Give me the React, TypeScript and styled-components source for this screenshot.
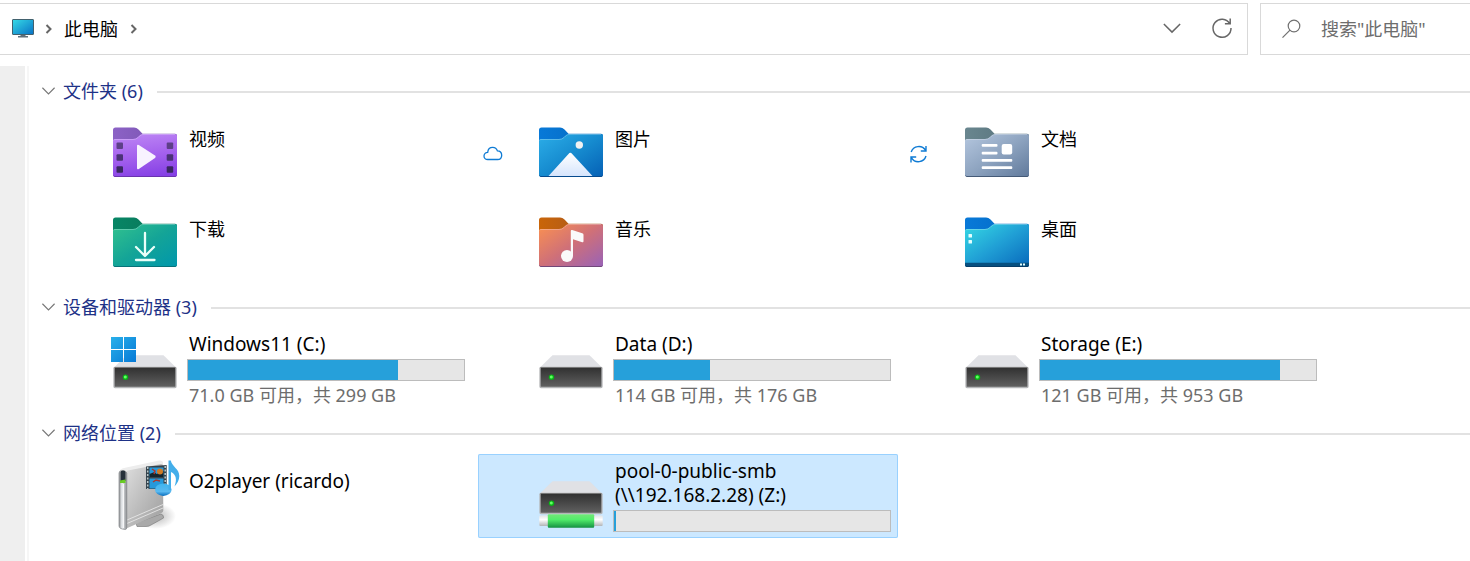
import React, { useState } from 'react';
import styled, { createGlobalStyle } from 'styled-components';

const GlobalStyle = createGlobalStyle`
  * { box-sizing: border-box; }
  body {
    margin: 0;
    background: #fff;
    color: #000;
    font: 18px/24px "Noto Sans", "Noto Sans CJK SC", sans-serif;
  }
  button, input { font: inherit; color: inherit; }
`;

const Page = styled.div`
  display: flex;
  flex-direction: column;
  min-height: 100vh;
  overflow-x: hidden;
`;

const Toolbar = styled.header`
  display: flex;
  gap: 12px;
  padding-top: 3px;
`;

const AddressBar = styled.nav`
  flex: 1;
  display: flex;
  align-items: center;
  height: 52px;
  padding: 0 14px 0 12px;
  border: 1px solid #d9d9d9;
  border-left: 0;
`;

const PlainButton = styled.button`
  display: flex;
  align-items: center;
  padding: 0;
  border: 0;
  background: none;
  cursor: pointer;
`;

const Crumb = styled(PlainButton)`
  margin-right: 12px;
`;

const CrumbArrow = styled.span`
  display: flex;
  margin: 0 11px 0 9px;
`;

const AddressActions = styled.div`
  display: flex;
  gap: 29px;
  margin-left: auto;
`;

const SearchBox = styled.label`
  flex: 0 0 210px;
  min-width: 0;
  display: flex;
  align-items: center;
  gap: 18px;
  height: 52px;
  padding-left: 20px;
  border: 1px solid #d9d9d9;
  border-right: 0;
`;

const SearchInput = styled.input`
  flex: 1;
  min-width: 0;
  padding: 0;
  border: 0;
  outline: 0;
  background: none;
  &::placeholder { color: #6d6d6d; opacity: 1; }
`;

const Body = styled.div`
  flex: 1;
  display: flex;
  margin-top: 11px;
`;

const SidePane = styled.aside`
  flex: 0 0 25px;
  background: #efefef;
`;

const Content = styled.main`
  flex: 1;
  min-width: 0;
  margin-left: 2px;
  padding: 4px 0 0 15px;
  border-left: 2px solid #f6f6f6;
`;

const GroupHeading = styled.h2`
  display: flex;
  align-items: center;
  gap: 14px;
  height: 42px;
  margin: 0;
  font-size: 18px;
  font-weight: 400;
  color: #1e3287;
  &::after {
    content: "";
    flex: 1;
    height: 2px;
    margin-top: 2px;
    background: #e2e2e2;
  }
`;

const GroupToggle = styled(PlainButton)`
  gap: 7px;
  margin-left: -3px;
`;

const TileGrid = styled.ul`
  display: grid;
  grid-template-columns: repeat(auto-fill, 420px);
  gap: 6px;
  margin: 0;
  padding: 0 0 0 8px;
  list-style: none;
`;

const Tile = styled.li<{ $selected?: boolean }>`
  display: flex;
  align-items: center;
  height: 84px;
  padding-right: 7px;
  border-radius: 2px;
  background: ${(p) => (p.$selected ? '#cce8ff' : 'transparent')};
  box-shadow: ${(p) => (p.$selected ? 'inset 0 0 0 1px #99d1ff' : 'none')};
`;

const StatusSlot = styled.div`
  flex: 0 0 56px;
  display: flex;
  padding-left: 5px;
`;

const TileIcon = styled.svg`
  flex: none;
  width: 72px;
  height: 84px;
`;

const TileBody = styled.div`
  flex: 1;
  min-width: 0;
  min-height: 54px;
  margin-left: 7px;
`;

const Name = styled.div<{ $device?: boolean }>`
  padding-left: 2px;
  font-size: ${(p) => (p.$device ? '19px' : '18px')};
  white-space: pre-line;
`;

const Detail = styled.div`
  padding: 1px 0 1px 2px;
  color: #6d6d6d;
`;

const UsageTrack = styled.div`
  height: 22px;
  margin: 3px 0 1px;
  border: 1px solid #bcbcbc;
  background: #e6e6e6;
`;

const UsageFill = styled.div`
  height: 100%;
  background: #26a0da;
`;

const ChevronRight = () => (
  <svg width="8" height="12" viewBox="0 0 8 12" fill="none" stroke="#666" strokeWidth="2" aria-hidden>
    <path d="M1.500 2l4 4-4 4" />
  </svg>
);

const ChevronDown = ({ size, color }: { size: number; color: string }) => (
  <svg width={size} height={size} viewBox="0 0 16 16" fill="none" stroke={color} strokeWidth="1.200" aria-hidden>
    <path d="M1.500 4L8 10.500l6.500-6.500" />
  </svg>
);

const ComputerIcon = () => (
  <svg width="24" height="20" viewBox="0 0 24 20" aria-hidden>
    <defs>
      <linearGradient id="screen" x1="0" y1="0" x2="1" y2="1">
        <stop stopColor="#36dbe6" />
        <stop offset="1" stopColor="#0871c5" />
      </linearGradient>
    </defs>
    <path d="M8.500 15.500h5v1.500h2.500v1.500H6v-1.500h2.500z" fill="#5f6f79" />
    <rect x=".5" y=".5" width="21" height="15" rx=".5" fill="url(#screen)" stroke="#42616e" />
  </svg>
);

const RefreshIcon = () => (
  <svg width="22" height="22" viewBox="0 0 22 22" fill="none" stroke="#666" strokeWidth="1.500" aria-hidden>
    <path d="M18.800 5.800A9 9 0 1 0 20 10M19.200 .5v5.300h-5.300" />
  </svg>
);

const SearchIcon = () => (
  <svg width="22" height="20" viewBox="0 0 22 20" fill="none" stroke="#707070" strokeWidth="1.200" aria-hidden>
    <circle cx="13" cy="7" r="5.800" />
    <path d="M9 11.200L1.500 18.700" />
  </svg>
);

const CloudIcon = () => (
  <svg width="20" height="16" viewBox="0 0 20 16" fill="none" stroke="#0f7bd4" strokeWidth="1.300" role="img" aria-label="云端">
    <path d="M4.800 13.500C2.500 13.500 1 12 1 10c0-2.100 1.600-3.700 3.700-3.700C5 3.300 7 1.400 9.700 1.400c2.300 0 4 1.400 4.700 3.500C17 4.800 18.700 6.700 18.700 9.200c0 2.600-1.700 4.300-4.200 4.300z" />
  </svg>
);

const SyncIcon = () => (
  <svg width="20" height="18" viewBox="0 0 20 18" fill="none" stroke="#0f7bd4" strokeWidth="1.400" role="img" aria-label="正在同步">
    <path d="M2.200 7A8 8 0 0 1 16.500 5.200M17 1v5h-5.200M17 11A8 8 0 0 1 2.500 12.800M2 17.500V12h5.200" />
  </svg>
);

type FolderKind = 'video' | 'picture' | 'document' | 'download' | 'music' | 'desktop';

const folderColors: Record<FolderKind, { back: [string, string]; front: [string, string, string]; edge: string }> = {
  video: { back: ['#8c62c6', '#7450aa'], front: ['#bb83f4', '#a461ed', '#8540e5'], edge: '#6934ae' },
  picture: { back: ['#0879d8', '#0568bd'], front: ['#2caee8', '#168bcf', '#0560b5'], edge: '#064a8d' },
  document: { back: ['#69868f', '#536d77'], front: ['#b5c7df', '#8ea4c0', '#60799b'], edge: '#455a77' },
  download: { back: ['#078665', '#0b7055'], front: ['#32c28e', '#14a497', '#0097ac'], edge: '#087279' },
  music: { back: ['#c96509', '#a35524'], front: ['#fb9150', '#cf7078', '#9862b8'], edge: '#714879' },
  desktop: { back: ['#0879d8', '#0268c3'], front: ['#35d9e4', '#209fd5', '#0868bb'], edge: '#073c67' },
};

const folderArt: Record<FolderKind, React.ReactNode> = {
  video: (
    <>
      {[30.500, 42.300, 54.200].map((y, i) => (
        <g key={y} fill={['#5d4088', '#4a3276', '#392861'][i]}>
          <rect x="8.500" y={y} width="6.500" height="6.500" rx="1" />
          <rect x="58.700" y={y} width="6.500" height="6.500" rx="1" />
        </g>
      ))}
      <path d="M29 34q0-2 1.800-1L47 43.400q1.500 1.300 0 2.600L30.800 56.900q-1.800 1-1.800-1z" fill="#f8f3ff" />
    </>
  ),
  picture: (
    <>
      <circle cx="45.300" cy="33" r="3.700" fill="#f1f1f1" />
      <path d="M14.300 64.300L34.500 42q1.800-2.300 3.700 0l20.500 22.300z" fill="url(#snow)" />
    </>
  ),
  document: (
    <g fill="#fff">
      <rect x="21.700" y="32" width="15.800" height="2.700" rx="1" />
      <rect x="21.700" y="39.700" width="15.800" height="2.700" rx="1" />
      <rect x="21.700" y="47" width="30.600" height="2.700" rx="1" />
      <rect x="21.700" y="54.200" width="30.600" height="2.700" rx="1" />
      <rect x="41.700" y="32" width="10.500" height="10.500" rx="2" />
    </g>
  ),
  download: (
    <path d="M37 31v23M28 45l9 9 9-9M28 58h18.500" fill="none" stroke="#eafff9" strokeWidth="2.300" strokeLinecap="round" strokeLinejoin="round" />
  ),
  music: (
    <g fill="#fafafa">
      <circle cx="33" cy="54" r="6" />
      <path d="M36.800 29q0-1.400 1.400-1l10 3.200q1.300.4 1.300 1.600v6.500q0 1.300-1.300.9L39 37.300V54h-2.200z" />
    </g>
  ),
  desktop: (
    <>
      <path d="M5 60.700h64V63q0 2-2 2H7q-2 0-2-2z" fill="#075080" />
      <g fill="#e4ffff">
        <rect x="8.500" y="32" width="3.500" height="3.500" rx=".5" />
        <rect x="8.500" y="38" width="3.500" height="3.500" rx=".5" />
        <rect x="60" y="61.500" width="2" height="2" />
        <rect x="63" y="61.500" width="2" height="2" />
      </g>
    </>
  ),
};

const FolderIcon = ({ kind }: { kind: FolderKind }) => {
  const { back, front, edge } = folderColors[kind];
  return (
    <TileIcon viewBox="0 0 72 84" aria-hidden>
      <defs>
        <linearGradient id={`${kind}-back`}>
          <stop stopColor={back[0]} />
          <stop offset="1" stopColor={back[1]} />
        </linearGradient>
        <linearGradient id={`${kind}-front`} x1={kind === 'video' ? '.4' : '0'} y1="0" x2={kind === 'video' ? '.6' : '1'} y2="1">
          <stop stopColor={front[0]} />
          <stop offset=".5" stopColor={front[1]} />
          <stop offset="1" stopColor={front[2]} />
        </linearGradient>
        <linearGradient id="snow" x1="0" y1="0" x2="0" y2="1">
          <stop stopColor="#fff" />
          <stop offset="1" stopColor="#d5e4fc" />
        </linearGradient>
      </defs>
      <path d="M5 31V18q0-2.500 2.500-2.500H26q2.500 0 4.500 2l4 4.300h32.500q2 0 2 2V31z" fill={`url(#${kind}-back)`} />
      <path d="M5 29q0-2 2-2h18q3 0 5-2l1.500-1.500Q33 22 35 22h32q2 0 2 2v38.500q0 2.500-2.500 2.500h-59Q5 65 5 62.500z" fill={`url(#${kind}-front)`} />
      <path d="M5.500 28.500q0-1 1.500-1h18q3 0 5-2l1.500-1.500q1.500-1.500 3.500-1.500h32" fill="none" stroke="#fff" strokeOpacity=".25" />
      {folderArt[kind]}
      <path d="M5.500 63.500q.5 1 1.500 1h60q1 0 1.500-1" fill="none" stroke={edge} />
    </TileIcon>
  );
};

const DriveIcon = ({ variant }: { variant?: 'system' | 'network' }) => (
  <TileIcon viewBox="0 0 72 84" aria-hidden>
    <defs>
      <linearGradient id="case" x1="0" y1="0" x2="0" y2="1">
        <stop stopColor="#303030" />
        <stop offset="1" stopColor="#626262" />
      </linearGradient>
      <linearGradient id="tube" x1="0" y1="0" x2="0" y2="1">
        <stop stopColor="#75e878" />
        <stop offset=".4" stopColor="#51ed6b" />
        <stop offset="1" stopColor="#149143" />
      </linearGradient>
      <linearGradient id="tube-end" x1="0" y1="0" x2="0" y2="1">
        <stop stopColor="#e2e4e6" />
        <stop offset=".4" stopColor="#fff" />
        <stop offset="1" stopColor="#b2b5b8" />
      </linearGradient>
      <linearGradient id="win" x1="0" y1="0" x2="1" y2="1">
        <stop stopColor="#29b0ea" />
        <stop offset="1" stopColor="#0679d6" />
      </linearGradient>
    </defs>
    <path d="M18.500 27.300h37L68.500 40H5.500z" fill="#e0e1e5" />
    <rect x="6" y="39.300" width="62" height="20.200" rx="1" fill="url(#case)" stroke="#b5b6b8" strokeWidth="1.300" />
    <path d="M6.500 39.500h61" stroke="#777" />
    <circle cx="17.500" cy="49.300" r="2.700" fill="#09b615" />
    <circle cx="17.300" cy="49" r="1.500" fill="#62ff65" />
    {variant === 'system' && (
      <path d="M3 9h12v12H3zM16 9h12v12H16zM3 22h12v12H3zM16 22h12v12H16z" fill="url(#win)" />
    )}
    {variant === 'network' && (
      <>
        <rect x="5.300" y="61.500" width="63.400" height="10.500" rx="1" fill="url(#tube-end)" />
        <rect x="13.800" y="60.200" width="46.400" height="13.500" rx="1" fill="url(#tube)" />
      </>
    )}
  </TileIcon>
);

const MediaServerIcon = () => (
  <TileIcon viewBox="0 0 72 84" aria-hidden>
    <defs>
      <linearGradient id="face" x1="0" y1="0" x2="1" y2="1">
        <stop stopColor="#dedede" />
        <stop offset=".5" stopColor="#bcbcbc" />
        <stop offset="1" stopColor="#9c9c9c" />
      </linearGradient>
      <linearGradient id="spine">
        <stop stopColor="#8d8f91" />
        <stop offset=".4" stopColor="#eef1f4" />
        <stop offset="1" stopColor="#8b8d90" />
      </linearGradient>
      <linearGradient id="note" x1="0" y1="0" x2="0" y2="1">
        <stop stopColor="#3eb5ee" />
        <stop offset=".65" stopColor="#5ab9f0" />
        <stop offset="1" stopColor="#086ebe" />
      </linearGradient>
      <radialGradient id="shade">
        <stop stopColor="#777" stopOpacity=".55" />
        <stop offset="1" stopColor="#777" stopOpacity="0" />
      </radialGradient>
    </defs>
    <ellipse cx="47" cy="62" rx="21" ry="13" fill="url(#shade)" />
    <path d="M28 69l25-9q3 1 2.500 4L43 71q-2 1.500-5 1.500H29z" fill="#a9a9a9" stroke="#7f7f7f" strokeWidth=".7" />
    <path d="M12 17q0-2 4-3L50 6.700q4-.8 5 1.300v5L19 20z" fill="#ededed" />
    <path d="M18 18.500q0-1.500 2-2L53 10q2 0 2 2l.3 44.500q0 1.500-1.500 2.200L18.300 74.500z" fill="url(#face)" />
    <path d="M19 66l36-15.500M19 69.500L55 54" stroke="#ececec" strokeWidth=".8" />
    <path d="M11 19q0-2.500 3.500-2.500T18.800 19v54q0 2.500-1.500 2.500-6.300-.5-6.300-3.500z" fill="url(#spine)" stroke="#85888b" strokeWidth=".7" />
    <path d="M12.500 18.500q0-2 2.500-2t2.500 2V27h-5z" fill="#26303a" />
    <path d="M12 26.500l5.500-1V29H12z" fill="#69cc24" />
    <path d="M15.500 30v44" stroke="#fff" strokeWidth=".8" />
    <path d="M38 12.500l20.700-1.500V35H38z" fill="#35424b" />
    <path d="M39.700 13v22M57.200 12v23" stroke="#b9c9cc" strokeWidth="1.500" strokeDasharray="2 1.500" />
    <path d="M41.500 13.500h14v9.500h-14zM41.500 24.500h14v10h-14z" fill="#2799db" />
    <path d="M41.500 20l5-2 2 2 7-3v6h-14z" fill="#14242c" />
    <circle cx="52" cy="17.500" r="3" fill="#cf7b26" />
    <path d="M44 15l3 2-1 3M45 28l3-2 4 1" stroke="#ad382c" strokeWidth="1.500" fill="none" />
    <ellipse cx="55.300" cy="35.700" rx="8.300" ry="6.200" fill="url(#note)" />
    <path d="M60.500 6.500h2.300c1.200 6.500 8.500 8 8.500 15.500 0 4-2.200 8-4.800 10.500C69 26 68.500 20.500 63 18v18h-2.500z" fill="#43aeea" />
  </TileIcon>
);

const Group = ({ title, children }: { title: string; children: React.ReactNode }) => {
  const [open, setOpen] = useState(true);
  return (
    <section>
      <GroupHeading>
        <GroupToggle type="button" aria-expanded={open} onClick={() => setOpen(!open)}>
          <ChevronDown size={15} color="#777" />
          {title}
        </GroupToggle>
      </GroupHeading>
      {open && <TileGrid>{children}</TileGrid>}
    </section>
  );
};

interface ItemProps {
  name: string;
  icon: React.ReactNode;
  status?: React.ReactNode;
  device?: boolean;
  used?: number;
  detail?: string;
  selected?: boolean;
}

const Item = ({ name, icon, status, device, used, detail, selected }: ItemProps) => (
  <Tile $selected={selected}>
    <StatusSlot>{status}</StatusSlot>
    {icon}
    <TileBody>
      <Name $device={device}>{name}</Name>
      {used !== undefined && (
        <UsageTrack role="progressbar" aria-label={name} aria-valuenow={Math.round(used * 100)}>
          <UsageFill style={{ width: `${used * 100}%` }} />
        </UsageTrack>
      )}
      {detail && <Detail>{detail}</Detail>}
    </TileBody>
  </Tile>
);

export default function App() {
  return (
    <Page>
      <GlobalStyle />
      <Toolbar>
        <AddressBar aria-label="地址栏">
          <ComputerIcon />
          <CrumbArrow><ChevronRight /></CrumbArrow>
          <Crumb type="button">此电脑</Crumb>
          <PlainButton type="button" aria-label="展开"><ChevronRight /></PlainButton>
          <AddressActions>
            <PlainButton type="button" aria-label="历史记录"><ChevronDown size={20} color="#666" /></PlainButton>
            <PlainButton type="button" aria-label="刷新"><RefreshIcon /></PlainButton>
          </AddressActions>
        </AddressBar>
        <SearchBox>
          <SearchIcon />
          <SearchInput type="text" aria-label="搜索" placeholder={'搜索"此电脑"'} />
        </SearchBox>
      </Toolbar>
      <Body>
        <SidePane />
        <Content>
          <Group title="文件夹 (6)">
            <Item name="视频" icon={<FolderIcon kind="video" />} />
            <Item name="图片" icon={<FolderIcon kind="picture" />} status={<CloudIcon />} />
            <Item name="文档" icon={<FolderIcon kind="document" />} status={<SyncIcon />} />
            <Item name="下载" icon={<FolderIcon kind="download" />} />
            <Item name="音乐" icon={<FolderIcon kind="music" />} />
            <Item name="桌面" icon={<FolderIcon kind="desktop" />} />
          </Group>
          <Group title="设备和驱动器 (3)">
            <Item device name="Windows11 (C:)" icon={<DriveIcon variant="system" />} used={0.762} detail="71.0 GB 可用，共 299 GB" />
            <Item device name="Data (D:)" icon={<DriveIcon />} used={0.348} detail="114 GB 可用，共 176 GB" />
            <Item device name="Storage (E:)" icon={<DriveIcon />} used={0.87} detail="121 GB 可用，共 953 GB" />
          </Group>
          <Group title="网络位置 (2)">
            <Item device name="O2player (ricardo)" icon={<MediaServerIcon />} />
            <Item device name={'pool-0-public-smb\n(\\\\192.168.2.28) (Z:)'} icon={<DriveIcon variant="network" />} used={0.007} selected />
          </Group>
        </Content>
      </Body>
    </Page>
  );
}
